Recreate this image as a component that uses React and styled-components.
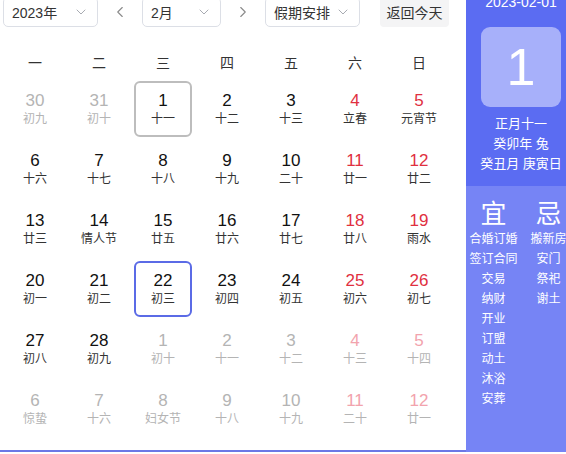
import React from 'react';
import styled, { createGlobalStyle } from 'styled-components';
import { ChevronDown, ChevronLeft, ChevronRight } from 'lucide-react';

const GlobalStyle = createGlobalStyle`
  html, body {
    margin: 0;
    padding: 0;
    overflow: hidden;
    background: #fff;
  }
  body {
    font-family: "Liberation Sans", "Noto Sans CJK SC", sans-serif;
    color: #333;
  }
`;

const Page = styled.div`
  display: flex;
  width: 576px;
  margin-top: -6px;
`;

const Main = styled.div`
  width: 463px;
  padding: 0 0 11px 3px;
  border-bottom: 2px solid #6b78e6;
`;

const Toolbar = styled.div`
  display: flex;
  align-items: center;
  height: 30px;
  margin-top: 3px;
`;

const Select = styled.div`
  box-sizing: border-box;
  display: flex;
  align-items: center;
  justify-content: space-between;
  width: ${(p) => p.$width}px;
  height: 30px;
  padding: 0 8px 0 8px;
  border: 1px solid #dcdfe6;
  border-radius: 5px;
  font-size: 14px;
  color: #333;
  background: #fff;
`;

const Arrow = styled.div`
  display: flex;
  align-items: center;
  justify-content: center;
  width: 44px;
  height: 30px;
  color: #8a8a8a;
`;

const TodayButton = styled.div`
  display: flex;
  align-items: center;
  justify-content: center;
  width: 69px;
  height: 30px;
  margin-left: 20px;
  border-radius: 4px;
  background: #f4f4f5;
  font-size: 14px;
  color: #333;
`;

const Grid = styled.div`
  display: grid;
  grid-template-columns: repeat(7, 64px);
  grid-template-rows: 34px;
  grid-auto-rows: 60px;
  margin-top: 18px;
`;

const WeekHead = styled.div`
  display: flex;
  align-items: center;
  justify-content: center;
  font-size: 14px;
  color: #333;
`;

const Cell = styled.div`
  box-sizing: border-box;
  display: flex;
  flex-direction: column;
  align-items: center;
  justify-content: center;
  width: 58px;
  height: 56px;
  margin: 2px 3px;
  border-radius: 6px;
  border: 2px solid
    ${(p) => (p.$mark === 'today' ? '#bdbdbd' : p.$mark === 'sel' ? '#5b6be6' : 'transparent')};
`;

const Num = styled.div`
  font-size: 17px;
  line-height: 20px;
  color: ${(p) => (p.$other ? (p.$red ? '#f2a3ad' : '#b4b4b4') : p.$red ? '#e0303f' : '#111')};
`;

const Lunar = styled.div`
  font-size: 12px;
  line-height: 16px;
  color: ${(p) => (p.$other ? '#b4b4b4' : '#333')};
`;

const Side = styled.div`
  display: flex;
  flex-direction: column;
  width: 110px;
  color: #fff;
`;

const SideTop = styled.div`
  display: flex;
  flex-direction: column;
  align-items: center;
  padding-bottom: 12px;
  background: #5b6cf2;
`;

const DateLine = styled.div`
  font-size: 14px;
  line-height: 16px;
`;

const DayBox = styled.div`
  display: flex;
  align-items: center;
  justify-content: center;
  width: 80px;
  height: 80px;
  margin: 17px 0 7px;
  border-radius: 9px;
  background: #a7b0fa;
  font-size: 52px;
  font-family: "Liberation Sans", sans-serif;
`;

const Info = styled.div`
  font-size: 13px;
  line-height: 20px;
`;

const SideBottom = styled.div`
  flex: 1;
  display: grid;
  grid-template-columns: 55px 55px;
  align-items: start;
  padding-top: 13px;
  background: #7684f5;
`;

const Column = styled.div`
  display: flex;
  flex-direction: column;
  align-items: center;
  white-space: nowrap;
`;

const Big = styled.div`
  font-size: 26px;
  line-height: 30px;
`;

const Item = styled.div`
  font-size: 12px;
  line-height: 20px;
`;

const weeks = ['一', '二', '三', '四', '五', '六', '日'];

const days = [
  [30, '初九', 1], [31, '初十', 1], [1, '十一', 0, 'today'], [2, '十二'], [3, '十三'], [4, '立春'], [5, '元宵节'],
  [6, '十六'], [7, '十七'], [8, '十八'], [9, '十九'], [10, '二十'], [11, '廿一'], [12, '廿二'],
  [13, '廿三'], [14, '情人节'], [15, '廿五'], [16, '廿六'], [17, '廿七'], [18, '廿八'], [19, '雨水'],
  [20, '初一'], [21, '初二'], [22, '初三', 0, 'sel'], [23, '初四'], [24, '初五'], [25, '初六'], [26, '初七'],
  [27, '初八'], [28, '初九'], [1, '初十', 1], [2, '十一', 1], [3, '十二', 1], [4, '十三', 1], [5, '十四', 1],
  [6, '惊蛰', 1], [7, '十六', 1], [8, '妇女节', 1], [9, '十八', 1], [10, '十九', 1], [11, '二十', 1], [12, '廿一', 1],
];

const good = ['合婚订婚', '签订合同', '交易', '纳财', '开业', '订盟', '动土', '沐浴', '安葬'];
const bad = ['搬新房', '安门', '祭祀', '谢土'];

const App = () => (
  <Page>
    <GlobalStyle />
    <Main>
      <Toolbar>
        <Select $width={95}>
          2023年
          <ChevronDown size={16} color="#a8abb2" strokeWidth={1.5} />
        </Select>
        <Arrow>
          <ChevronLeft size={18} strokeWidth={1.5} />
        </Arrow>
        <Select $width={79}>
          2月
          <ChevronDown size={16} color="#a8abb2" strokeWidth={1.5} />
        </Select>
        <Arrow>
          <ChevronRight size={18} strokeWidth={1.5} />
        </Arrow>
        <Select $width={95}>
          假期安排
          <ChevronDown size={16} color="#a8abb2" strokeWidth={1.5} />
        </Select>
        <TodayButton>返回今天</TodayButton>
      </Toolbar>
      <Grid>
        {weeks.map((w) => (
          <WeekHead key={w}>{w}</WeekHead>
        ))}
        {days.map(([n, l, other, mark], i) => {
          const red = i % 7 >= 5;
          return (
            <Cell key={i} $mark={mark}>
              <Num $other={other} $red={red}>{n}</Num>
              <Lunar $other={other}>{l}</Lunar>
            </Cell>
          );
        })}
      </Grid>
    </Main>
    <Side>
      <SideTop>
        <DateLine>2023-02-01</DateLine>
        <DayBox>1</DayBox>
        <Info>正月十一</Info>
        <Info>癸卯年 兔</Info>
        <Info>癸丑月 庚寅日</Info>
      </SideTop>
      <SideBottom>
        <Column>
          <Big>宜</Big>
          {good.map((g) => (
            <Item key={g}>{g}</Item>
          ))}
        </Column>
        <Column>
          <Big>忌</Big>
          {bad.map((b) => (
            <Item key={b}>{b}</Item>
          ))}
        </Column>
      </SideBottom>
    </Side>
  </Page>
);

export default App;
